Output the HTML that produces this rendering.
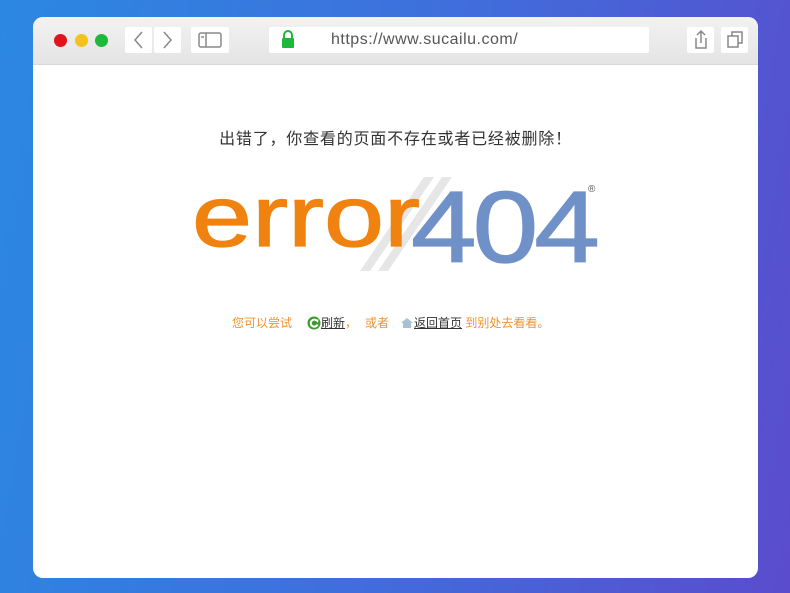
<!DOCTYPE html>
<html><head><meta charset="utf-8"><style>
*{margin:0;padding:0;box-sizing:border-box}
body{width:790px;height:593px;overflow:hidden;background:linear-gradient(100deg,#2b88e2 0%,#3f6fdc 50%,#5a4ccd 100%);font-family:"Liberation Sans","Noto Sans CJK SC",sans-serif;position:relative}
.win{position:absolute;left:33px;top:17px;width:725px;height:561px;background:#fff;border-radius:10px;overflow:hidden}
.bar{height:48px;background:linear-gradient(#f2f2f2,#e4e4e4);border-bottom:1px solid #d8d8d8;position:relative}
.dot{position:absolute;top:17px;width:13px;height:13px;border-radius:50%}
.btn{position:absolute;top:10px;height:26px;background:#fff;border-radius:2px}
.url{position:absolute;left:236px;top:10px;width:380px;height:26px;background:#fff;border-radius:2px;font-size:16px;color:#555;letter-spacing:.5px}
.msg{position:absolute;top:108px;left:0;width:725px;text-align:center;font-size:16px;color:#333;letter-spacing:.8px}
.e{position:absolute;left:159px;top:138px;font-size:108px;color:#f0820f;line-height:1;transform:scaleY(.8);transform-origin:0 90px;-webkit-text-stroke:1.5px #f0820f}
.n{position:absolute;left:378px;top:145px;font-size:118px;color:#7090c8;line-height:1;letter-spacing:-4px;transform:scaleY(.86);transform-origin:0 106px;-webkit-text-stroke:1.5px #7090c8}
.tip{position:absolute;top:297px;font-size:12px;color:#f0922e;white-space:nowrap}
.tip u{color:#333}
</style></head><body>
<div class="win">
 <div class="bar">
  <div class="dot" style="left:21px;background:#e0141c"></div>
  <div class="dot" style="left:42px;background:#f4c21a"></div>
  <div class="dot" style="left:62px;background:#1db83c"></div>
  <div class="btn" style="left:92px;width:27px"><svg width="27" height="26"><path d="M17 5L10 13L17 21" stroke="#888" stroke-width="1.5" fill="none"/></svg></div>
  <div class="btn" style="left:121px;width:27px"><svg width="27" height="26"><path d="M10 5L17 13L10 21" stroke="#888" stroke-width="1.5" fill="none"/></svg></div>
  <div class="btn" style="left:158px;width:38px"><svg width="38" height="26"><rect x="8" y="6" width="22" height="14" rx="2" stroke="#888" stroke-width="1.5" fill="none"/><path d="M15 6V20M10 10h3" stroke="#888" stroke-width="1.5"/></svg></div>
  <div class="url"><svg width="20" height="26" style="position:absolute;left:9px;top:0"><path d="M6 11V8a4 4 0 0 1 8 0v3" stroke="#1db83c" stroke-width="2" fill="none"/><rect x="4" y="11" width="12" height="10" rx="1" fill="#1db83c"/></svg><span style="position:absolute;left:62px;top:4px">https://www.sucailu.com/</span></div>
  <div class="btn" style="left:654px;width:27px"><svg width="27" height="26"><path d="M9 11v10h10V11M14 4v12M10 8l4-4 4 4" stroke="#888" stroke-width="1.5" fill="none"/></svg></div>
  <div class="btn" style="left:688px;width:27px"><svg width="27" height="26"><rect x="7" y="9" width="10" height="11" stroke="#888" stroke-width="1.5" fill="none"/><path d="M11 9V5h10v11h-4" stroke="#888" stroke-width="1.5" fill="none"/></svg></div>
 </div>
 <div class="msg">出错了，你查看的页面不存在或者已经被删除！</div>
 <svg style="position:absolute;left:325px;top:160px" width="110" height="100"><path d="M2 94L66 0H76L12 94Z" fill="#e6e6e6"/><path d="M20 94L84 0H94L30 94Z" fill="#e6e6e6"/></svg>
 <div class="e">error</div>
 <div class="n">404</div>
 <div style="position:absolute;left:555px;top:167px;font-size:10px;color:#555">®</div>
 <div class="tip" style="left:199px">您可以尝试</div>
 <svg style="position:absolute;left:274px;top:299px" width="14" height="14"><circle cx="7" cy="7" r="6.5" fill="#3a9a2a"/><path d="M10 5A3.5 3.5 0 1 0 10.5 8.5" stroke="#fff" stroke-width="2" fill="none"/><path d="M8 3.5L11.5 3.5L11 7Z" fill="#fff"/></svg>
 <div class="tip" style="left:288px"><u>刷新</u>，</div>
 <div class="tip" style="left:332px">或者</div>
 <svg style="position:absolute;left:367px;top:300px" width="14" height="12"><path d="M1 6L7 1L13 6H11V11H3V6Z" fill="#a8c0d4"/></svg>
 <div class="tip" style="left:381px"><u>返回首页</u> 到别处去看看。</div>
</div>
</body></html>
